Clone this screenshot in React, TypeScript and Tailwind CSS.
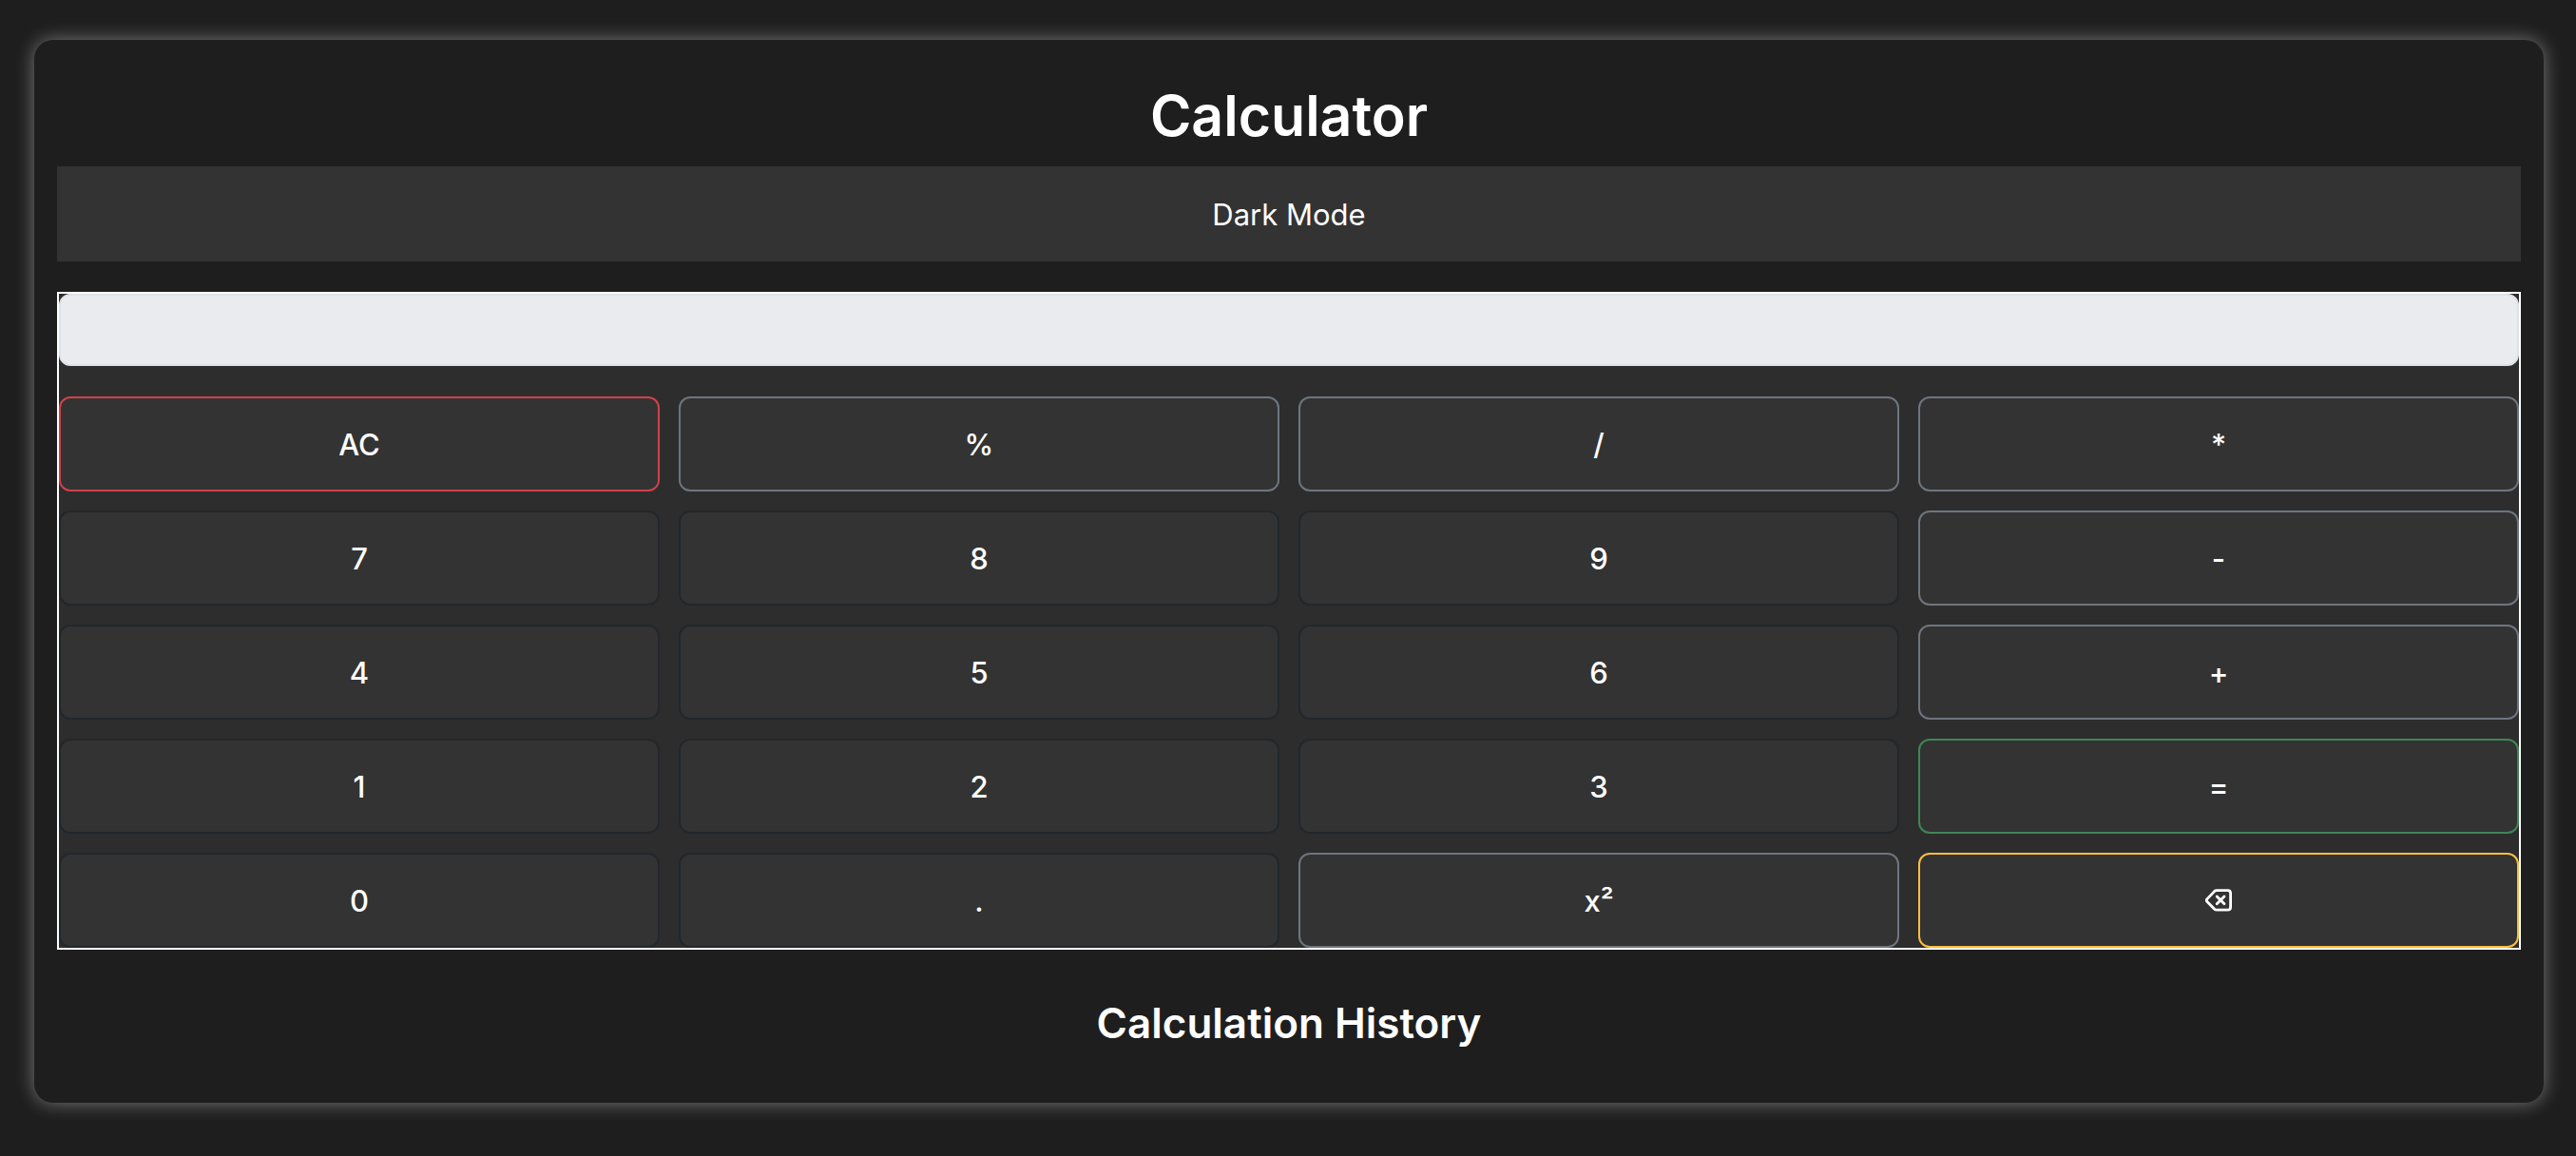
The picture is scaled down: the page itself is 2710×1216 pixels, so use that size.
import { useState } from "react";

type Tone = "danger" | "neutral" | "digit" | "success" | "warning";

const tones: Record<Tone, string> = {
  danger: "border-[#cf4249]",
  neutral: "border-[#6f757e]",
  digit: "border-[#23272b]",
  success: "border-[#3f8657]",
  warning: "border-[#fcbf3f]",
};

const keys: { label: string; tone: Tone }[] = [
  { label: "AC", tone: "danger" },
  { label: "%", tone: "neutral" },
  { label: "/", tone: "neutral" },
  { label: "*", tone: "neutral" },
  { label: "7", tone: "digit" },
  { label: "8", tone: "digit" },
  { label: "9", tone: "digit" },
  { label: "-", tone: "neutral" },
  { label: "4", tone: "digit" },
  { label: "5", tone: "digit" },
  { label: "6", tone: "digit" },
  { label: "+", tone: "neutral" },
  { label: "1", tone: "digit" },
  { label: "2", tone: "digit" },
  { label: "3", tone: "digit" },
  { label: "=", tone: "success" },
  { label: "0", tone: "digit" },
  { label: ".", tone: "digit" },
  { label: "x²", tone: "neutral" },
  { label: "Backspace", tone: "warning" },
];

function BackspaceIcon() {
  return (
    <svg
      viewBox="0 0 28 24"
      className="h-6 w-7"
      fill="none"
      stroke="currentColor"
      strokeWidth="2.8"
      strokeLinecap="round"
      strokeLinejoin="round"
      aria-hidden="true"
    >
      <path d="M12 1.6h11.6c1.9 0 3 1.1 3 3v14.6c0 1.9-1.1 3-3 3H12c-1 0-1.7-.3-2.4-1L2 13.600c-.9-.9-.9-2.100 0-3l7.600-8c.7-.7 1.400-1 2.400-1z" />
      <path d="M12.200 7.900l7.800 7.900M20 7.900l-7.800 7.900" />
    </svg>
  );
}

export default function App() {
  const [value, setValue] = useState("");

  const press = (label: string) => {
    if (label === "AC") setValue("");
    else if (label === "Backspace") setValue(value.slice(0, -1));
    else if (label === "x²") setValue(value ? String(Number(value) ** 2) : "");
    else if (label !== "=") setValue(value + label);
  };

  return (
    <div className="min-h-screen bg-[#1e1e1e] pt-[42px] pr-[34px] pb-14 pl-9 font-['Inter',sans-serif] text-white">
      <main className="rounded-[20px] bg-[#1e1e1e] px-6 pt-10 pb-[50px] shadow-[0_0_20px_rgba(255,255,255,0.4)]">
        <h1 className="mb-[13px] text-center text-[59px] leading-[80px] font-semibold">Calculator</h1>
        <button type="button" className="block h-[100px] w-full bg-[#333333] pt-0.5 text-[31px]">
          Dark Mode
        </button>
        <section aria-label="Keypad" className="mt-8 border-2 border-white bg-[#2d2d2d]">
          <input
            type="text"
            aria-label="Result"
            readOnly
            value={value}
            className="block h-[76px] w-full rounded-xl border-2 border-[#dee2e6] bg-[#e9ebef] px-6 text-right text-[31px] text-[#212529]"
          />
          <div className="mt-8 grid grid-cols-4 gap-5">
            {keys.map(({ label, tone }) => (
              <button
                key={label}
                type="button"
                aria-label={label}
                onClick={() => press(label)}
                className={`flex h-[100px] items-center justify-center rounded-xl border-2 bg-[#333333] text-[31px] font-medium ${tones[tone]}`}
              >
                {label === "Backspace" ? <BackspaceIcon /> : <span className="pt-0.5">{label}</span>}
              </button>
            ))}
          </div>
        </section>
        <h2 className="mt-11 text-center text-[44px] leading-[67px] font-semibold">Calculation History</h2>
      </main>
    </div>
  );
}
